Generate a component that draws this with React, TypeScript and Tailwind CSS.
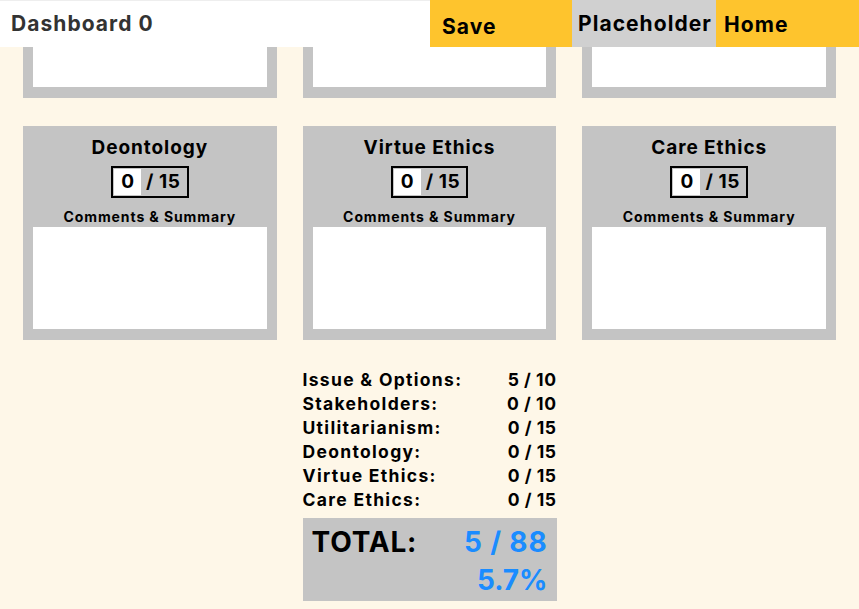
const font = "font-['Inter','Liberation_Sans',sans-serif]"

const cards = [
  { title: 'Issue & Options', max: 10 },
  { title: 'Stakeholders', max: 10 },
  { title: 'Utilitarianism', max: 15 },
  { title: 'Deontology', max: 15 },
  { title: 'Virtue Ethics', max: 15 },
  { title: 'Care Ethics', max: 15 },
]

const scores = [
  { label: 'Issue & Options:', value: '5 / 10' },
  { label: 'Stakeholders:', value: '0 / 10' },
  { label: 'Utilitarianism:', value: '0 / 15' },
  { label: 'Deontology:', value: '0 / 15' },
  { label: 'Virtue Ethics:', value: '0 / 15' },
  { label: 'Care Ethics:', value: '0 / 15' },
]

function Card({ title, max }: { title: string; max: number }) {
  return (
    <div className="flex h-[214px] flex-col items-center bg-[#c4c4c4] px-[10px] pb-[11px] pt-[11px]">
      <h2 className="text-[19px] font-bold leading-[22px] tracking-[0.05em] text-black">{title}</h2>
      <div className="mt-[7px] flex h-[32px] items-center border-2 border-black pl-[1px] pr-[6px]">
        <input
          readOnly
          value="0"
          className="h-[26px] w-[27px] bg-white text-center text-[19px] font-bold text-black outline-none"
        />
        <span className="ml-[5px] text-[19px] font-bold tracking-[0.03em] text-black">/ {max}</span>
      </div>
      <p className="mt-[10px] text-[14px] font-bold leading-[17px] tracking-[0.065em] text-black">
        Comments &amp; Summary
      </p>
      <textarea readOnly className="mt-[2px] w-full flex-1 resize-none bg-white outline-none" />
    </div>
  )
}

export default function App() {
  return (
    <div className={`relative h-[609px] w-[859px] overflow-hidden bg-[#fef7e8] ${font}`}>
      {/* contenido desplazado: la cabecera fija tapa la primera fila */}
      <main className="-mt-[116px] px-[23px]">
        <div className="grid grid-cols-3 gap-x-[26px] gap-y-[28px]">
          {cards.map((c) => (
            <Card key={c.title} title={c.title} max={c.max} />
          ))}
        </div>
        <div className="mx-auto mt-[28px] w-[254px]">
          <div className="flex flex-col">
            {scores.map((s) => (
              <div
                key={s.label}
                className="flex justify-between text-[17.5px] font-bold leading-[24px] tracking-[0.075em] text-black"
              >
                <span>{s.label}</span>
                <span className="tracking-[0.03em]">{s.value}</span>
              </div>
            ))}
          </div>
          <div className="mt-[6px] h-[83px] bg-[#c4c4c4] px-[9px] pt-[5px]">
            <div className="flex items-center justify-between text-[28px] font-bold leading-[38px]">
              <span className="tracking-[0.03em] text-black">TOTAL:</span>
              <span className="tracking-[0.03em] text-[#1a8cff]">5 / 88</span>
            </div>
            <div className="text-right text-[28px] font-bold leading-[38px] text-[#1a8cff]">5.7%</div>
          </div>
        </div>
      </main>

      <header className="absolute left-0 top-0 flex h-[47px] w-full text-[21px] font-bold tracking-[0.05em]">
        <div className="flex w-[430px] items-center border-t border-[#eeeeee] bg-white pl-[11px] text-[#333333]">
          Dashboard 0
        </div>
        <button className="flex w-[142px] items-center bg-[#fec42d] pl-[12px] pt-[6px] text-black">
          Save
        </button>
        <button className="flex w-[144px] items-center bg-[#d0d0d0] pl-[6px] text-black">
          Placeholder
        </button>
        <button className="flex flex-1 items-center bg-[#fec42d] pl-[8px] pt-[2px] text-black">
          Home
        </button>
      </header>
    </div>
  )
}
